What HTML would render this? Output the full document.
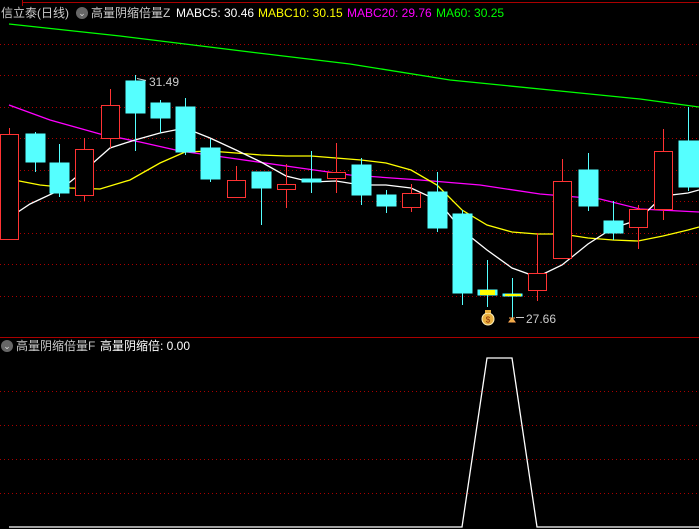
<!DOCTYPE html>
<html><head><meta charset="utf-8"><style>
html,body{margin:0;padding:0;background:#000;width:699px;height:529px;overflow:hidden}
.t{position:absolute;font-family:"Liberation Sans","Noto Sans CJK SC",sans-serif;font-size:12px;white-space:nowrap;line-height:14px}
</style></head><body>
<svg width="699" height="529" style="position:absolute;left:0;top:0" shape-rendering="crispEdges">
<g stroke="#a00" stroke-width="1" stroke-dasharray="1,3">
<line x1="0" y1="44.5" x2="699" y2="44.5"/><line x1="0" y1="75.5" x2="699" y2="75.5"/><line x1="0" y1="107.5" x2="699" y2="107.5"/><line x1="0" y1="138.5" x2="699" y2="138.5"/><line x1="0" y1="170.5" x2="699" y2="170.5"/><line x1="0" y1="201.5" x2="699" y2="201.5"/><line x1="0" y1="233.5" x2="699" y2="233.5"/><line x1="0" y1="264.5" x2="699" y2="264.5"/><line x1="0" y1="296.5" x2="699" y2="296.5"/>
<line x1="0" y1="391.5" x2="699" y2="391.5"/><line x1="0" y1="425.5" x2="699" y2="425.5"/><line x1="0" y1="459.5" x2="699" y2="459.5"/><line x1="0" y1="493.5" x2="699" y2="493.5"/>
</g>
<line x1="22" y1="2.5" x2="699" y2="2.5" stroke="#a00"/>
<line x1="22.5" y1="0" x2="22.5" y2="6" stroke="#a00"/>
<line x1="0" y1="337.5" x2="699" y2="337.5" stroke="#a00"/>
<g shape-rendering="auto" fill="none" stroke-width="1.3">
<polyline stroke="#0f0" points="9,24 120,36 250,52 350,64 450,80 550,90 640,99 699,107"/>
<polyline stroke="#f0f" points="9,105 50,120 100,134 140,142 180,151 230,158 300,168 350,175 420,180 480,185 540,194 600,199 640,209 699,212"/>
<polyline stroke="#ff0" points="9,179 40,185 70,188 100,189 130,180 160,163 185,152 210,151 236,153 261,155 286,156 311,156 336,158 361,160 386,163 411,170 437,185 462,210 487,225 512,232 537,234 562,234 588,238 613,240 638,241 663,236 688,230 699,227"/>
<polyline stroke="#fff" points="9,218 30,204 60,190 85,170 110,148 135,140 160,133 185,128 210,138 236,150 261,162 286,176 311,182 336,181 361,185 386,185 411,188 437,200 462,230 487,250 512,268 537,277 562,265 588,244 613,228 638,220 663,196 688,193 699,190"/>
</g>
<g stroke-width="1">
<!-- red candles: x, top, bottom, hi, lo -->
<g stroke="#f33" fill="#000">
<line x1="9.5" y1="128" x2="9.5" y2="134"/><rect x="0.5" y="134.5" width="18" height="105"/>
<line x1="84.5" y1="138" x2="84.5" y2="201"/><rect x="75.5" y="149.5" width="18" height="46"/>
<line x1="110.5" y1="89" x2="110.5" y2="148"/><rect x="101.5" y="105.5" width="18" height="33"/>
<line x1="236.5" y1="166" x2="236.5" y2="180"/><rect x="227.5" y="180.5" width="18" height="17"/>
<line x1="286.5" y1="164" x2="286.5" y2="208"/><rect x="277.5" y="184.5" width="18" height="5"/>
<line x1="336.5" y1="143" x2="336.5" y2="193"/><rect x="327.5" y="172.5" width="18" height="6"/>
<line x1="411.5" y1="184" x2="411.5" y2="212"/><rect x="402.5" y="193.5" width="18" height="14"/>
<line x1="537.5" y1="233" x2="537.5" y2="301"/><rect x="528.5" y="273.5" width="18" height="17"/>
<line x1="562.5" y1="159" x2="562.5" y2="181"/><rect x="553.5" y="181.5" width="18" height="77"/>
<line x1="638.5" y1="205" x2="638.5" y2="249"/><rect x="629.5" y="209.5" width="18" height="18"/>
<line x1="663.5" y1="129" x2="663.5" y2="220"/><rect x="654.5" y="151.5" width="18" height="58"/>
</g>
<g stroke="#5ff" fill="#5ff">
<line x1="35.5" y1="132" x2="35.5" y2="172"/><rect x="26" y="134" width="19" height="28"/>
<line x1="59.5" y1="144" x2="59.5" y2="197"/><rect x="50" y="163" width="19" height="30"/>
<line x1="135.5" y1="75" x2="135.5" y2="151"/><rect x="126" y="81" width="19" height="32"/>
<line x1="160.5" y1="100" x2="160.5" y2="133"/><rect x="151" y="103" width="19" height="15"/>
<line x1="185.5" y1="98" x2="185.5" y2="155"/><rect x="176" y="107" width="19" height="45"/>
<line x1="210.5" y1="139" x2="210.5" y2="182"/><rect x="201" y="148" width="19" height="31"/>
<line x1="261.5" y1="172" x2="261.5" y2="225"/><rect x="252" y="172" width="19" height="16"/>
<line x1="311.5" y1="151" x2="311.5" y2="193"/><rect x="302" y="179" width="19" height="3"/>
<line x1="361.5" y1="158" x2="361.5" y2="205"/><rect x="352" y="165" width="19" height="30"/>
<line x1="386.5" y1="190" x2="386.5" y2="213"/><rect x="377" y="195" width="19" height="11"/>
<line x1="437.5" y1="172" x2="437.5" y2="232"/><rect x="428" y="192" width="19" height="36"/>
<line x1="462.5" y1="210" x2="462.5" y2="305"/><rect x="453" y="214" width="19" height="79"/>
<line x1="487.5" y1="260" x2="487.5" y2="307"/><rect x="478" y="290" width="19" height="5"/>
<line x1="512.5" y1="278" x2="512.5" y2="318"/><rect x="503" y="294" width="19" height="2"/>
<line x1="588.5" y1="153" x2="588.5" y2="211"/><rect x="579" y="170" width="19" height="36"/>
<line x1="613.5" y1="201" x2="613.5" y2="240"/><rect x="604" y="221" width="19" height="12"/>
<line x1="688.5" y1="107" x2="688.5" y2="191"/><rect x="679" y="141" width="20" height="46"/>
</g>
<rect x="480" y="290" width="15" height="5" fill="#ff0" stroke="none"/>
<rect x="505" y="294" width="16" height="2" fill="#ff0" stroke="none"/>
</g>
<g shape-rendering="auto">
<ellipse cx="488" cy="319" rx="6" ry="6" fill="#e8b040" stroke="#fff3c0"/>
<rect x="485" y="310" width="6" height="3" fill="#e8b040"/>
<text x="488" y="322.5" font-size="8" fill="#8b2b00" text-anchor="middle" font-family="Liberation Sans">$</text>
<path d="M509 322 L515 322 L512 318 Z M509 318 L515 318" fill="#e8b040" stroke="#fa5"/>
<line x1="516" y1="317.5" x2="524" y2="317.5" stroke="#ccc"/>
<line x1="137" y1="78.5" x2="146" y2="80.5" stroke="#ccc"/>
<polyline fill="none" stroke="#fff" stroke-width="1.3" points="9,527 462,527 487,358 512,358 537,527 699,527"/>
</g>
</svg>
<div class="t" style="left:1px;top:6px;color:#ccc">信立泰(日线)</div>
<div style="position:absolute;left:76px;top:7px;width:12px;height:12px;border-radius:50%;background:#666;color:#ddd;font-size:9px;line-height:12px;text-align:center">⌄</div>
<div class="t" style="left:91px;top:6px;color:#ccc">高量阴缩倍量Z</div>
<div class="t" style="left:176px;top:6px;color:#fff">MABC5: 30.46</div>
<div class="t" style="left:258px;top:6px;color:#ff0">MABC10: 30.15</div>
<div class="t" style="left:347px;top:6px;color:#f0f">MABC20: 29.76</div>
<div class="t" style="left:436px;top:6px;color:#0f0">MA60: 30.25</div>
<div class="t" style="left:149px;top:75px;color:#ccc">31.49</div>
<div class="t" style="left:526px;top:312px;color:#ccc">27.66</div>
<div style="position:absolute;left:1px;top:340px;width:12px;height:12px;border-radius:50%;background:#666;color:#ddd;font-size:9px;line-height:12px;text-align:center">⌄</div>
<div class="t" style="left:16px;top:339px;color:#ccc">高量阴缩倍量F</div>
<div class="t" style="left:100px;top:339px;color:#fff">高量阴缩倍: 0.00</div>
</body></html>
